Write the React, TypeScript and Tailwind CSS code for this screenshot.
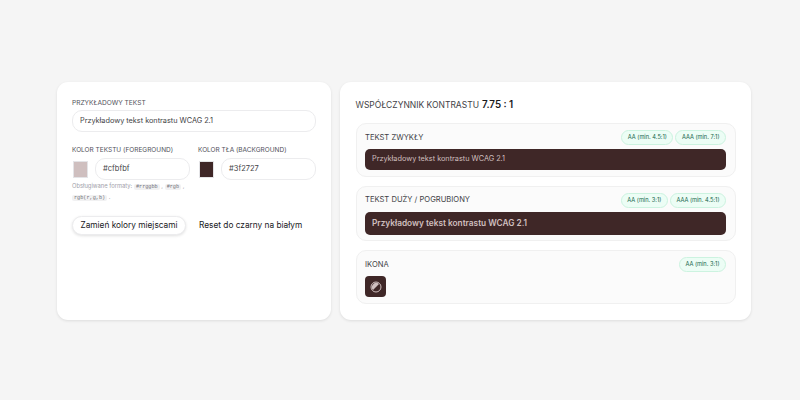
const font = { fontFamily: 'Inter, "Liberation Sans", sans-serif' }

function Badge({ children }: { children: React.ReactNode }) {
  return (
    <span className="flex h-[15px] items-center whitespace-nowrap rounded-full border border-[#ccf3e0] bg-[#ecfdf5] px-[5.5px] text-[5.7px] text-[#14654a]">
      {children}
    </span>
  )
}

function Row({ title, badges, children }: { title: string; badges: string[]; children: React.ReactNode }) {
  return (
    <div className="rounded-[10px] border border-[#f0f0f0] bg-[#fbfbfb] pl-[8.5px] pr-[8.5px] pt-[6px] pb-[5.5px]">
      <div className="mb-[4px] flex h-[15px] items-center justify-between">
        <span className="text-[7.6px] text-[#3f3f46]">{title}</span>
        <div className="flex gap-[2px]">
          {badges.map((b) => (
            <Badge key={b}>{b}</Badge>
          ))}
        </div>
      </div>
      {children}
    </div>
  )
}

function ColorField({ label, color, value }: { label: string; color: string; value: string }) {
  return (
    <div className="flex-1">
      <div className="mb-[3px] whitespace-nowrap text-[6.5px] leading-[10px] text-[#52525b]">{label}</div>
      <div className="flex items-center gap-[7px]">
        <div className="ml-[1px] h-[17px] w-[15px] border border-[#e4e4e7]" style={{ backgroundColor: color }} />
        <div className="flex h-[22px] flex-1 items-center rounded-[10px] border border-[#ececee] bg-white px-[7px] text-[7.5px] text-[#3f3f46]">
          {value}
        </div>
      </div>
    </div>
  )
}

function Code({ children }: { children: React.ReactNode }) {
  return <code className="rounded-[2px] bg-[#f1f1f2] px-[2px] font-['Liberation_Mono'] text-[5.2px] text-[#71717a]">{children}</code>
}

export default function App() {
  return (
    <div style={font} className="flex h-[400px] w-[800px] items-start gap-[9px] bg-[#f5f5f5] pl-[57px] pt-[82px]">
      <div className="h-[238px] w-[274px] rounded-[11px] bg-white px-[15px] pt-[16px] shadow-[0_1px_3px_rgba(0,0,0,0.1)]">
        <div className="mb-[2px] text-[6.6px] leading-[10px] text-[#52525b]">PRZYKŁADOWY TEKST</div>
        <div className="flex h-[22px] items-center rounded-[10px] border border-[#ececee] bg-white px-[7px] text-[7.3px] text-[#3f3f46]">
          Przykładowy tekst kontrastu WCAG 2.1
        </div>
        <div className="mt-[13px] flex gap-[8px]">
          <ColorField label="KOLOR TEKSTU (FOREGROUND)" color="#cfbfbf" value="#cfbfbf" />
          <ColorField label="KOLOR TŁA (BACKGROUND)" color="#3f2727" value="#3f2727" />
        </div>
        <div className="mt-[1px] w-[120px] text-[5.8px] leading-[10px] text-[#a1a1aa]">
          Obsługiwane formaty: <Code>#rrggbb</Code> , <Code>#rgb</Code> , <Code>rgb(r,g,b)</Code> .
        </div>
        <div className="mt-[13px] flex items-center gap-[13px]">
          <button className="flex h-[19px] w-[114px] items-center justify-center whitespace-nowrap rounded-full border border-[#ececee] bg-white text-[8.3px] text-[#18181b] shadow-[0_1px_3px_rgba(0,0,0,0.12)]">
            Zamień kolory miejscami
          </button>
          <button className="whitespace-nowrap text-[8.3px] text-[#18181b]">Reset do czarny na białym</button>
        </div>
      </div>
      <div className="h-[238px] w-[411px] rounded-[11px] bg-white px-[15.5px] pt-[15px] shadow-[0_1px_3px_rgba(0,0,0,0.1)]">
        <div className="mb-[10px] flex h-[16px] items-center gap-[3px] text-[8.5px] text-[#3f3f46]">
          WSPÓŁCZYNNIK KONTRASTU <span className="text-[9.8px] font-semibold text-[#18181b]">7.75 : 1</span>
        </div>
        <div className="flex flex-col gap-[9px]">
          <Row title="TEKST ZWYKŁY" badges={['AA (min. 4.5:1)', 'AAA (min. 7:1)']}>
            <div className="flex h-[21px] items-center rounded-[5px] bg-[#3f2727] px-[7px] text-[7.3px] text-[#cfbfbf]">
              Przykładowy tekst kontrastu WCAG 2.1
            </div>
          </Row>
          <Row title="TEKST DUŻY / POGRUBIONY" badges={['AA (min. 3:1)', 'AAA (min. 4.5:1)']}>
            <div className="flex h-[23px] items-center rounded-[5px] bg-[#3f2727] px-[7px] text-[8.3px] font-semibold text-[#cfbfbf]">
              Przykładowy tekst kontrastu WCAG 2.1
            </div>
          </Row>
          <Row title="IKONA" badges={['AA (min. 3:1)']}>
            <div className="flex h-[21px] w-[21px] items-center justify-center rounded-[4px] bg-[#3f2727]">
              <svg width="12" height="12" viewBox="0 0 24 24" fill="none" stroke="#cfbfbf" strokeWidth="2">
                <circle cx="12" cy="12" r="10" />
                <path d="M6 18 A8.5 8.5 0 0 1 18 6 Z" fill="#cfbfbf" stroke="none" />
              </svg>
            </div>
          </Row>
        </div>
      </div>
    </div>
  )
}
